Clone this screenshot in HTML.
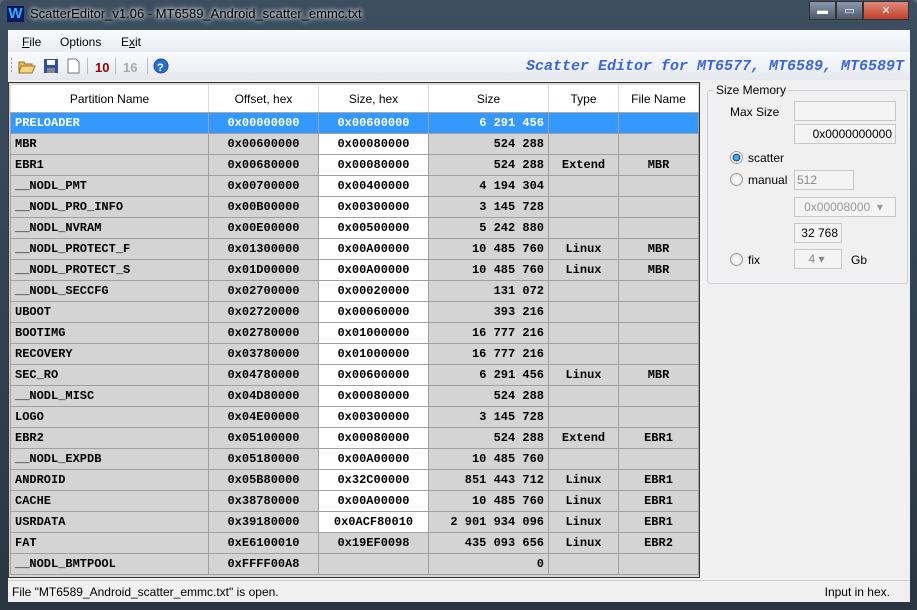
<!DOCTYPE html>
<html><head><style>
*{margin:0;padding:0;box-sizing:border-box}
body{width:917px;height:610px;background:#5a6a78;font-family:"Liberation Sans",sans-serif;font-size:12px;overflow:hidden;position:relative}
.frame{position:absolute;left:0;top:0;width:917px;height:610px;background:linear-gradient(#3c4e60,#2a3542);border-radius:6px 6px 0 0}
.title{position:absolute;left:30px;top:6px;color:#000;font-size:13px;text-shadow:0 0 6px #fff,0 0 4px #fff}
.logo{position:absolute;left:7px;top:6px;width:17px;height:16px;color:#3af;font-weight:bold;font-size:15px;line-height:16px;background:#0a1a60;text-align:center}
.btns{position:absolute;right:8px;top:1px;height:19px;display:flex}
.btns div{width:27px;height:19px;border:1px solid #333;background:linear-gradient(#8a9aaa,#4a5a6a);color:#fff;font-size:11px;text-align:center;line-height:18px}
.btns .x{width:46px;background:linear-gradient(#e08a7a,#c0402a)}
.client{position:absolute;left:8px;top:30px;width:902px;height:572px;background:#f0f0f0}
.menu{position:absolute;left:0;top:0;width:902px;height:22px;background:linear-gradient(#fafbfd,#e8ecf2)}
.menu span{position:absolute;top:5px;font-size:12px}
.tb{position:absolute;left:0;top:22px;width:902px;height:28px;background:linear-gradient(#fafbfd,#e4e8ee)}
.hd{position:absolute;right:6px;top:6px;color:#3a66d8;font:italic bold 15px "Liberation Mono",monospace}
table{position:absolute;left:2px;top:54px;border-collapse:collapse;font:bold 12px "Liberation Mono",monospace;table-layout:fixed}
.wrap{position:absolute;left:0;top:52px;width:692px;height:496px;border:1px solid #333;background:#d4d4d4}
td,th{height:21px;border:1px solid #a0a0a0;padding:0 4px;white-space:nowrap;overflow:hidden;background:#d4d4d4}
th{height:28px;background:#fff;font:12px "Liberation Sans",sans-serif;font-weight:normal;border-color:#dcdcdc;border-bottom:1px solid #aaa}
td:nth-child(2),td:nth-child(3),td:nth-child(5),td:nth-child(6){text-align:center}
td:nth-child(4){text-align:right}
td.w{background:#fff}
tr.sel td{background:#3399ff;color:#fff}
.grp{position:absolute;left:699px;top:60px;width:201px;height:194px;border:1px solid #ccd;border-radius:3px}
.grp .lg{position:absolute;left:6px;top:-8px;background:#f0f0f0;padding:0 2px}
.box{position:absolute;border:1px solid #c8c8c8;background:#f4f4f4;text-align:right;padding-right:3px;line-height:18px;height:20px;color:#000}
.rad{position:absolute;width:13px;height:13px;border-radius:50%;border:1px solid #999;background:radial-gradient(#fff,#ddd)}
.status{position:absolute;left:0;top:550px;width:902px;height:22px;background:#f0f0f0;border-top:1px solid #ccc}
</style></head><body>
<div class="frame"></div>
<div class="logo">W</div>
<div class="title">ScatterEditor_v1.06 - MT6589_Android_scatter_emmc.txt</div>
<div class="btns"><div>▬</div><div>▭</div><div class="x">✕</div></div>
<div class="client">
<div class="menu"><span style="left:14px"><u>F</u>ile</span><span style="left:52px">Options</span><span style="left:113px">E<u>x</u>it</span></div>
<div class="tb">
<svg width="170" height="28" style="position:absolute;left:0;top:0">
<g fill="#999"><rect x="3" y="6" width="1" height="2"/><rect x="3" y="10" width="1" height="2"/><rect x="3" y="14" width="1" height="2"/><rect x="3" y="18" width="1" height="2"/></g>
<path d="M11 10h5l1 2h7v9H11z" fill="#e8c060" stroke="#a07020"/><path d="M13 14h14l-3 7H11z" fill="#f4d880" stroke="#a07020"/>
<rect x="36" y="7" width="14" height="14" fill="#3050a0"/><rect x="39" y="8" width="8" height="5" fill="#fff"/><rect x="39" y="16" width="8" height="5" fill="#888"/>
<path d="M60 7h8l3 3v11H60z" fill="#fff" stroke="#777"/>
<rect x="79" y="6" width="1" height="16" fill="#bbb"/>
<text x="87" y="20" font-family="Liberation Sans" font-weight="bold" font-size="13" fill="#900">10</text>
<rect x="107" y="6" width="1" height="16" fill="#bbb"/>
<text x="115" y="20" font-family="Liberation Sans" font-weight="bold" font-size="13" fill="#aaa">16</text>
<rect x="139" y="6" width="1" height="16" fill="#bbb"/>
<circle cx="153" cy="14" r="7" fill="#2a70d0" stroke="#1a4a9a"/><text x="149" y="19" font-family="Liberation Sans" font-weight="bold" font-size="11" fill="#fff">?</text>
</svg>
<div class="hd">Scatter Editor for MT6577, MT6589, MT6589T</div>
</div>
<div class="wrap"></div>
<table>
<colgroup><col style="width:198px"><col style="width:110px"><col style="width:110px"><col style="width:120px"><col style="width:70px"><col style="width:80px"></colgroup>
<tr><th>Partition Name</th><th>Offset, hex</th><th>Size, hex</th><th>Size</th><th>Type</th><th>File Name</th></tr>
<tr class="sel"><td>PRELOADER</td><td>0x00000000</td><td>0x00600000</td><td>6 291 456</td><td></td><td></td></tr>
<tr><td>MBR</td><td>0x00600000</td><td class="w">0x00080000</td><td>524 288</td><td></td><td></td></tr>
<tr><td>EBR1</td><td>0x00680000</td><td class="w">0x00080000</td><td>524 288</td><td>Extend</td><td>MBR</td></tr>
<tr><td>__NODL_PMT</td><td>0x00700000</td><td class="w">0x00400000</td><td>4 194 304</td><td></td><td></td></tr>
<tr><td>__NODL_PRO_INFO</td><td>0x00B00000</td><td class="w">0x00300000</td><td>3 145 728</td><td></td><td></td></tr>
<tr><td>__NODL_NVRAM</td><td>0x00E00000</td><td class="w">0x00500000</td><td>5 242 880</td><td></td><td></td></tr>
<tr><td>__NODL_PROTECT_F</td><td>0x01300000</td><td class="w">0x00A00000</td><td>10 485 760</td><td>Linux</td><td>MBR</td></tr>
<tr><td>__NODL_PROTECT_S</td><td>0x01D00000</td><td class="w">0x00A00000</td><td>10 485 760</td><td>Linux</td><td>MBR</td></tr>
<tr><td>__NODL_SECCFG</td><td>0x02700000</td><td class="w">0x00020000</td><td>131 072</td><td></td><td></td></tr>
<tr><td>UBOOT</td><td>0x02720000</td><td class="w">0x00060000</td><td>393 216</td><td></td><td></td></tr>
<tr><td>BOOTIMG</td><td>0x02780000</td><td class="w">0x01000000</td><td>16 777 216</td><td></td><td></td></tr>
<tr><td>RECOVERY</td><td>0x03780000</td><td class="w">0x01000000</td><td>16 777 216</td><td></td><td></td></tr>
<tr><td>SEC_RO</td><td>0x04780000</td><td class="w">0x00600000</td><td>6 291 456</td><td>Linux</td><td>MBR</td></tr>
<tr><td>__NODL_MISC</td><td>0x04D80000</td><td class="w">0x00080000</td><td>524 288</td><td></td><td></td></tr>
<tr><td>LOGO</td><td>0x04E00000</td><td class="w">0x00300000</td><td>3 145 728</td><td></td><td></td></tr>
<tr><td>EBR2</td><td>0x05100000</td><td class="w">0x00080000</td><td>524 288</td><td>Extend</td><td>EBR1</td></tr>
<tr><td>__NODL_EXPDB</td><td>0x05180000</td><td class="w">0x00A00000</td><td>10 485 760</td><td></td><td></td></tr>
<tr><td>ANDROID</td><td>0x05B80000</td><td class="w">0x32C00000</td><td>851 443 712</td><td>Linux</td><td>EBR1</td></tr>
<tr><td>CACHE</td><td>0x38780000</td><td class="w">0x00A00000</td><td>10 485 760</td><td>Linux</td><td>EBR1</td></tr>
<tr><td>USRDATA</td><td>0x39180000</td><td class="w">0x0ACF80010</td><td>2 901 934 096</td><td>Linux</td><td>EBR1</td></tr>
<tr><td>FAT</td><td>0xE6100010</td><td>0x19EF0098</td><td>435 093 656</td><td>Linux</td><td>EBR2</td></tr>
<tr><td>__NODL_BMTPOOL</td><td>0xFFFF00A8</td><td></td><td>0</td><td></td><td></td></tr>
</table>
<div class="grp"><span class="lg">Size Memory</span>
<div style="position:absolute;left:22px;top:14px">Max Size</div>
<div class="box" style="left:86px;top:10px;width:102px"></div>
<div class="box" style="left:86px;top:33px;width:102px">0x0000000000</div>
<div class="rad" style="left:22px;top:60px;background:radial-gradient(#4af 30%,#135 45%,#fff 55%)"></div><div style="position:absolute;left:40px;top:60px">scatter</div>
<div class="rad" style="left:22px;top:82px"></div><div style="position:absolute;left:40px;top:82px">manual</div>
<div class="box" style="left:86px;top:79px;width:60px;text-align:left;padding-left:2px;color:#888">512</div>
<div class="box" style="left:86px;top:106px;width:102px;text-align:center;color:#999">0x00008000 &nbsp;▾</div>
<div class="box" style="left:86px;top:132px;width:48px">32 768</div>
<div class="rad" style="left:22px;top:162px"></div><div style="position:absolute;left:40px;top:162px">fix</div>
<div class="box" style="left:86px;top:158px;width:48px;text-align:center;color:#888">4 ▾</div>
<div style="position:absolute;left:143px;top:162px">Gb</div>
</div>
<div class="status"><span style="position:absolute;left:4px;top:4px">File "MT6589_Android_scatter_emmc.txt" is open.</span><span style="position:absolute;right:20px;top:4px">Input in hex.</span></div>
</div>
</body></html>
